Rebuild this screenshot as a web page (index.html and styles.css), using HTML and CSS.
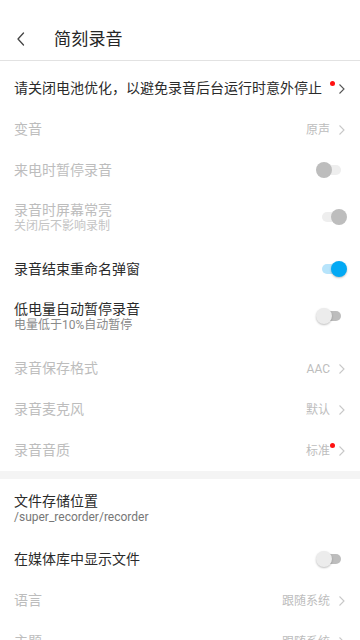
FILE: index.html
```html
<!DOCTYPE html>
<html lang="zh-CN">
<head>
<meta charset="utf-8">
<meta name="viewport" content="width=360, initial-scale=1">
<title>简刻录音</title>
<link rel="stylesheet" href="styles.css">
</head>
<body>
<header class="topbar">
  <button class="back" aria-label="返回">
    <svg width="8" height="14" viewBox="0 0 8 14"><path d="M6.5 1 L1 7 L6.5 13" fill="none" stroke="#444" stroke-width="1.3" stroke-linecap="round" stroke-linejoin="round"/></svg>
  </button>
  <h1 class="title">简刻录音</h1>
</header>

<main class="list">
  <div class="row row-first">
    <span class="label">请关闭电池优化，以避免录音后台运行时意外停止</span>
    <span class="end"><span class="chev dark"><i class="dot"></i><svg width="8" height="12" viewBox="0 0 8 12"><path d="M1.5 1.5 L6 6 L1.5 10.5" fill="none" stroke="#555" stroke-width="1.1"/></svg></span></span>
  </div>

  <div class="row off">
    <span class="label">变音</span>
    <span class="end"><span class="value">原声</span><span class="chev"><svg width="8" height="12" viewBox="0 0 8 12"><path d="M1.5 1.5 L6 6 L1.5 10.5" fill="none" stroke="#c8c8c8" stroke-width="1.1"/></svg></span></span>
  </div>

  <div class="row off">
    <span class="label">来电时暂停录音</span>
    <span class="toggle dis"><span class="track"></span><span class="thumb"></span></span>
  </div>

  <div class="row two off">
    <span class="text"><span class="label">录音时屏幕常亮</span><span class="sub">关闭后不影响录制</span></span>
    <span class="toggle dis on"><span class="track"></span><span class="thumb"></span></span>
  </div>

  <div class="row">
    <span class="label">录音结束重命名弹窗</span>
    <span class="toggle blue on"><span class="track"></span><span class="thumb"></span></span>
  </div>

  <div class="row two">
    <span class="text"><span class="label">低电量自动暂停录音</span><span class="sub">电量低于10%自动暂停</span></span>
    <span class="toggle idle"><span class="track"></span><span class="thumb"></span></span>
  </div>

  <div class="row off">
    <span class="label">录音保存格式</span>
    <span class="end"><span class="value">AAC</span><span class="chev"><svg width="8" height="12" viewBox="0 0 8 12"><path d="M1.5 1.5 L6 6 L1.5 10.5" fill="none" stroke="#c8c8c8" stroke-width="1.1"/></svg></span></span>
  </div>

  <div class="row off">
    <span class="label">录音麦克风</span>
    <span class="end"><span class="value">默认</span><span class="chev"><svg width="8" height="12" viewBox="0 0 8 12"><path d="M1.5 1.5 L6 6 L1.5 10.5" fill="none" stroke="#c8c8c8" stroke-width="1.1"/></svg></span></span>
  </div>

  <div class="row off">
    <span class="label">录音音质</span>
    <span class="end"><span class="value">标准</span><span class="chev"><i class="dot"></i><svg width="8" height="12" viewBox="0 0 8 12"><path d="M1.5 1.5 L6 6 L1.5 10.5" fill="none" stroke="#c8c8c8" stroke-width="1.1"/></svg></span></span>
  </div>

  <div class="band"></div>

  <div class="row two centered">
    <span class="text"><span class="label">文件存储位置</span><span class="sub path">/super_recorder/recorder</span></span>
  </div>

  <div class="row">
    <span class="label">在媒体库中显示文件</span>
    <span class="toggle idle"><span class="track"></span><span class="thumb"></span></span>
  </div>

  <div class="row off">
    <span class="label">语言</span>
    <span class="end"><span class="value">跟随系统</span><span class="chev"><svg width="8" height="12" viewBox="0 0 8 12"><path d="M1.5 1.5 L6 6 L1.5 10.5" fill="none" stroke="#c8c8c8" stroke-width="1.1"/></svg></span></span>
  </div>

  <div class="row off">
    <span class="label">主题</span>
    <span class="end"><span class="value">跟随系统</span><span class="chev"><svg width="8" height="12" viewBox="0 0 8 12"><path d="M1.5 1.5 L6 6 L1.5 10.5" fill="none" stroke="#c8c8c8" stroke-width="1.1"/></svg></span></span>
  </div>
</main>
</body>
</html>
```

FILE: styles.css
```css
* { box-sizing: border-box; }

html, body {
  margin: 0;
  padding: 0;
  background: #ffffff;
}

body {
  width: 360px;
  height: 640px;
  overflow: hidden;
  font-family: Roboto, "Noto Sans CJK SC", "Noto Sans", sans-serif;
  color: #333333;
  font-size: 14px;
}

.topbar {
  height: 61px;
  display: flex;
  align-items: center;
  border-bottom: 1px solid #e2e2e2;
  padding: 18px 0 0 17px;
}

.back {
  border: 0;
  background: none;
  padding: 0;
  margin: 0;
  width: 8px;
  height: 14px;
  display: flex;
}

.title {
  margin: 0 0 0 29px;
  font-size: 17px;
  font-weight: 400;
  color: #262626;
  line-height: 20px;
  letter-spacing: 0.2px;
}

.list {
  display: flex;
  flex-direction: column;
}

.row {
  min-height: 41px;
  display: flex;
  align-items: center;
  justify-content: space-between;
  padding: 0 14px 0 14px;
}

.row-first {
  height: 48px;
  padding-top: 7px;
}

.label {
  font-size: 14px;
  line-height: 17px;
  color: #2b2b2b;
  white-space: nowrap;
}

.row.off .label { color: #bdbdbd; }

.row.two {
  min-height: 58px;
  padding-top: 11px;
  padding-bottom: 16px;
}

.row.two.centered {
  min-height: 60px;
  padding-top: 14px;
  padding-bottom: 15px;
}

.text {
  display: flex;
  flex-direction: column;
}

.sub {
  font-size: 12px;
  line-height: 14px;
  color: #8a8a8a;
}

.row.off .sub { color: #c4c4c4; }

.sub.path { color: #777777; }

.end {
  display: flex;
  align-items: center;
}

.value {
  font-size: 12px;
  line-height: 14px;
  color: #bdbdbd;
  margin-right: 8px;
}

.chev {
  position: relative;
  display: flex;
  width: 8px;
  height: 12px;
}

.dot {
  position: absolute;
  left: -8px;
  top: -1.5px;
  width: 5px;
  height: 5px;
  border-radius: 50%;
  background: #ff1111;
}

.toggle {
  position: relative;
  width: 31px;
  height: 16px;
  margin-right: -1px;
  margin-top: -2px;
}

.track {
  position: absolute;
  left: 6px;
  top: 3px;
  width: 19px;
  height: 10px;
  border-radius: 5px;
  background: #eeeeee;
}

.thumb {
  position: absolute;
  top: 0;
  left: 0;
  width: 16px;
  height: 16px;
  border-radius: 50%;
  background: #bdbdbd;
}

.toggle.on .thumb { left: 15px; }

.toggle.blue .track { background: #b7e4fb; }
.toggle.blue .thumb {
  background: #03a9f4;
  box-shadow: 0 1px 2px rgba(0, 0, 0, 0.25);
}

.toggle.idle .track { background: #bdbdbd; }
.toggle.idle .thumb {
  background: #ececec;
  box-shadow: 0 1px 2px rgba(0, 0, 0, 0.25);
}

.band {
  height: 8px;
  background: #f4f4f4;
}
```
